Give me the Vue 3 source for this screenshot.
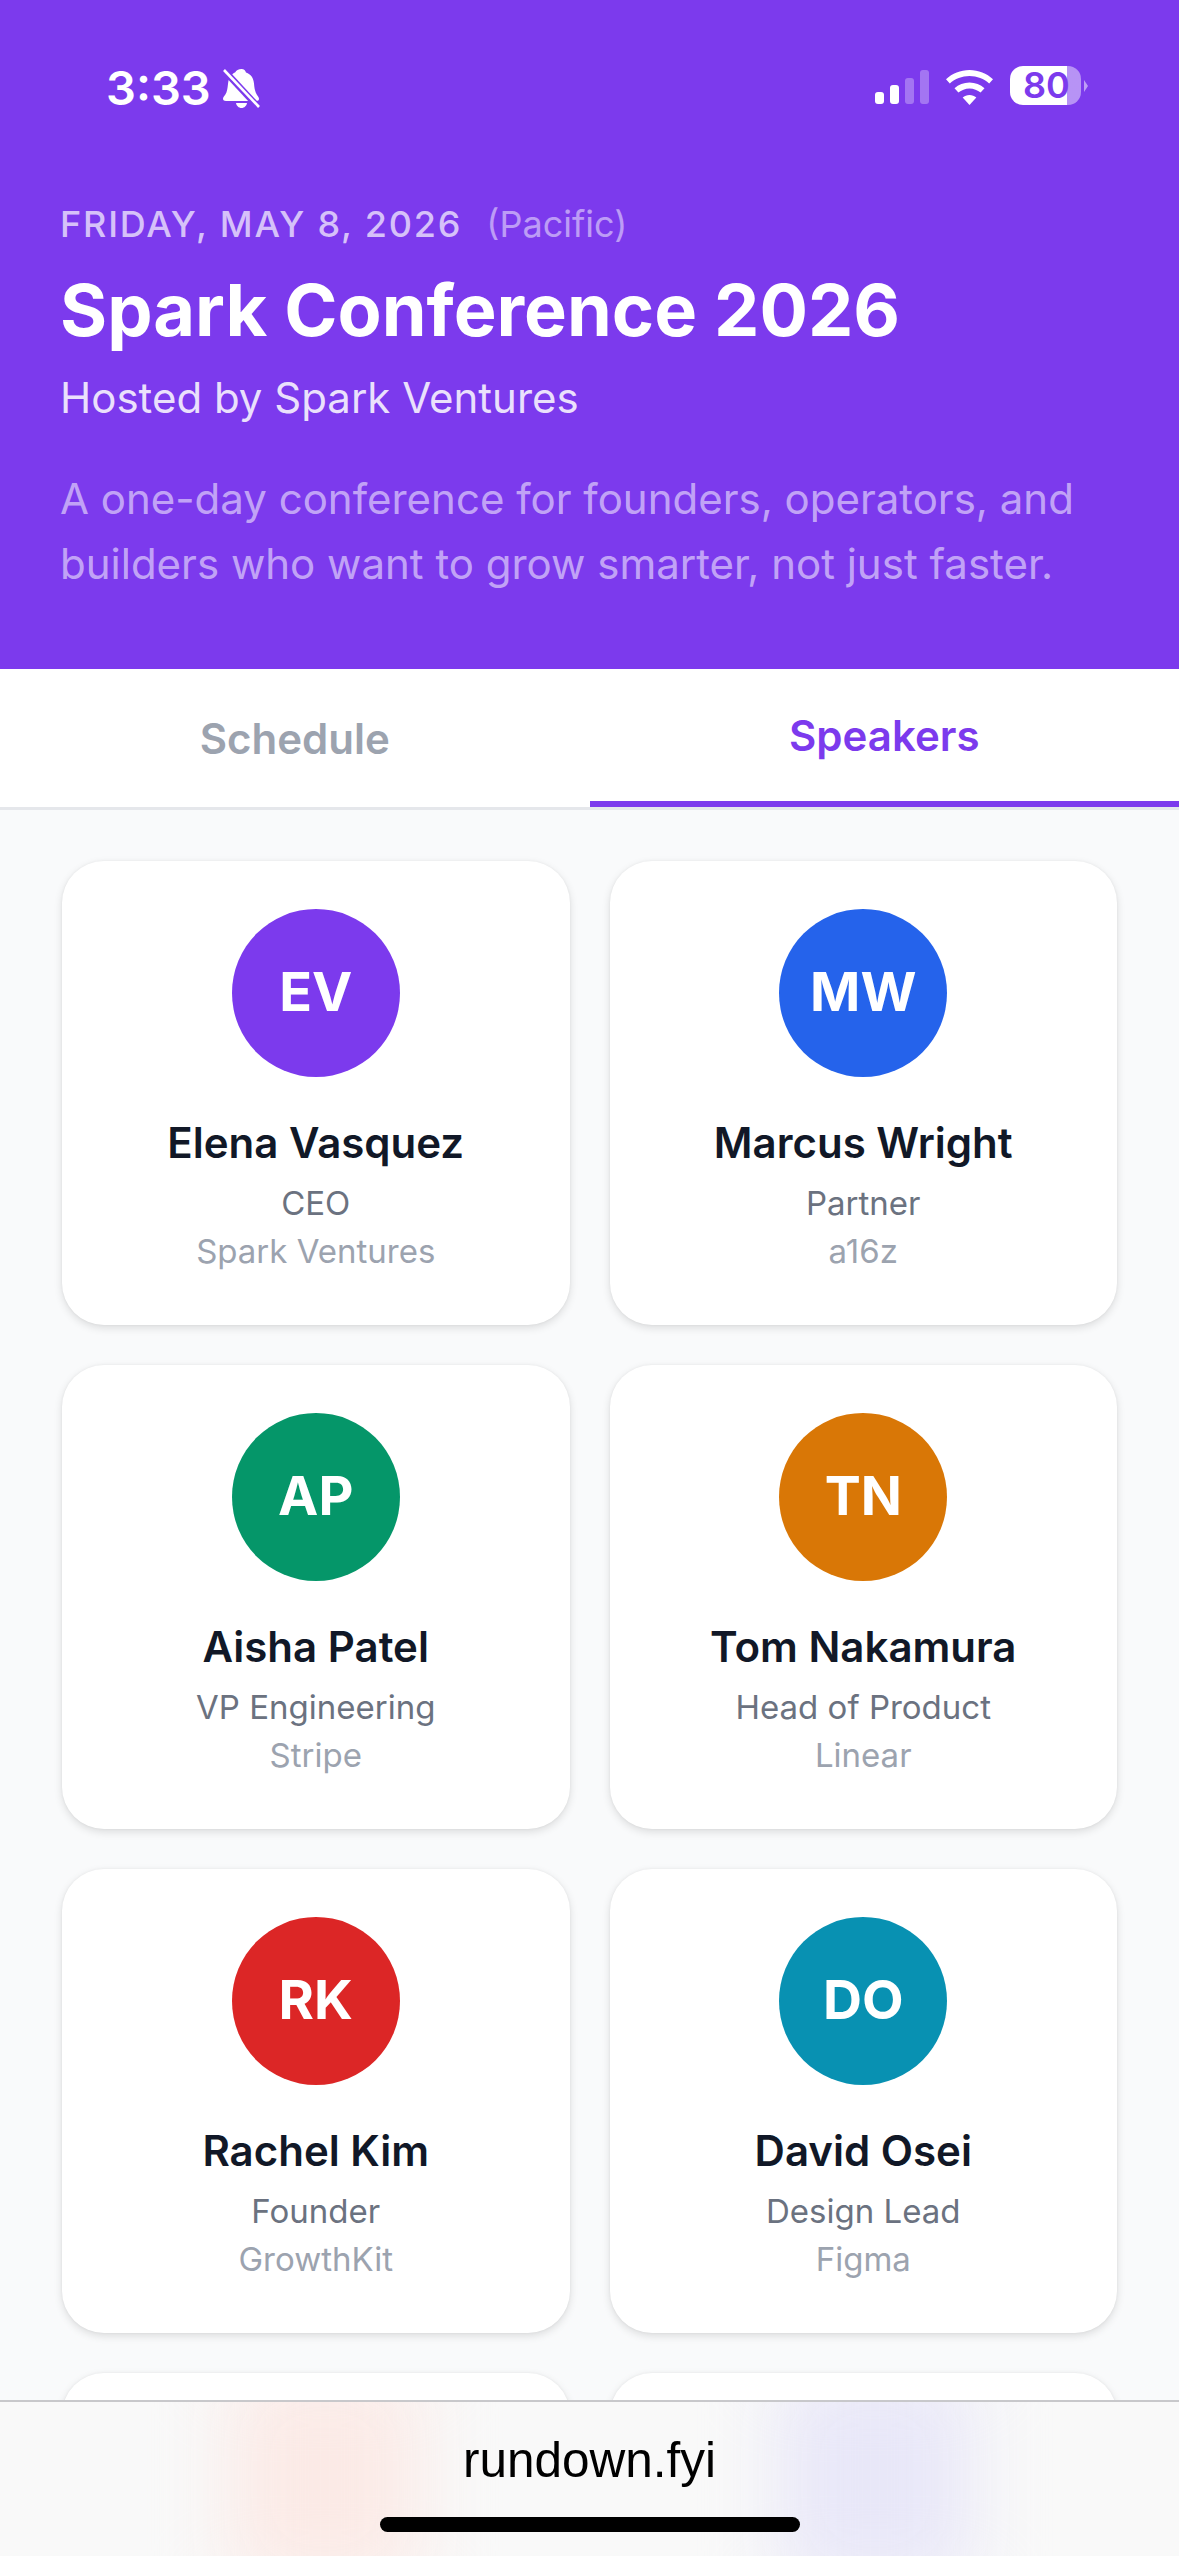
<script setup>
const speakers = [
  { initials: 'EV', name: 'Elena Vasquez', role: 'CEO', company: 'Spark Ventures', color: '#7c3aed' },
  { initials: 'MW', name: 'Marcus Wright', role: 'Partner', company: 'a16z', color: '#2563eb' },
  { initials: 'AP', name: 'Aisha Patel', role: 'VP Engineering', company: 'Stripe', color: '#059669' },
  { initials: 'TN', name: 'Tom Nakamura', role: 'Head of Product', company: 'Linear', color: '#d97706' },
  { initials: 'RK', name: 'Rachel Kim', role: 'Founder', company: 'GrowthKit', color: '#dc2626' },
  { initials: 'DO', name: 'David Osei', role: 'Design Lead', company: 'Figma', color: '#0891b2' }
]
</script>

<template>
  <div class="page">
    <header class="hero">
      <div class="status">
        <div class="status-left">
          <span class="time">3:33</span>
          <svg class="bell" viewBox="0 0 37 39" width="37" height="39">
            <path fill="#fff" d="M18.5 0c2.6 0 4 1.8 4.5 3.6 5 1.6 7.5 5.6 8 11 .4 4.4 1 8.600 3 11.400 1 1.500 2 2.600 2 4 0 1.200-1 2-2.500 2H3c-1.700 0-3-.8-3-2.200 0-1.400 1.200-2.500 2.200-4 1.800-2.600 2.300-6 2.800-10.800.3-2.600.6-4.500 1.800-6.800 1-1.800 3-3.800 5.500-5C13 1.800 15.500 0 18.500 0z"/>
            <path fill="#fff" d="M13 34h11c-.4 2.800-2.700 5-5.500 5S13.400 36.800 13 34z"/>
            <path stroke="#7c3aed" stroke-width="6.500" d="M-2 -2 L37 40"/>
            <path stroke="#fff" stroke-width="2.600" d="M1 1 L36 38"/>
          </svg>
        </div>
        <div class="status-right">
          <div class="signal">
            <i class="bar b1"></i><i class="bar b2"></i><i class="bar b3 dim"></i><i class="bar b4 dim"></i>
          </div>
          <svg class="wifi" viewBox="0 0 47 35" width="47" height="35">
            <path fill="#fff" d="M23.500 0C32.500 0 40.700 3.500 47 9.200l-3.800 4.300C38 8.800 31 6 23.500 6S9 8.800 3.800 13.500L0 9.200C6.300 3.500 14.500 0 23.500 0z"/>
            <path fill="#fff" d="M23.500 12.500c5.700 0 11 2.200 15 5.800l-3.900 4.300c-3-2.600-6.900-4.200-11.100-4.200s-8.100 1.600-11.100 4.200l-3.900-4.300c4-3.600 9.300-5.800 15-5.800z"/>
            <path fill="#fff" d="M23.500 25c2.600 0 5 1 6.800 2.600L23.500 35l-6.800-7.400C18.500 26 20.900 25 23.500 25z"/>
          </svg>
          <div class="battery">
            <div class="cell"><span class="level">80</span></div>
            <i class="nub"></i>
          </div>
        </div>
      </div>
      <div class="date-line">
        <span class="date">FRIDAY, MAY 8, 2026</span>
        <span class="zone">(Pacific)</span>
      </div>
      <h1 class="title">Spark Conference 2026</h1>
      <p class="host">Hosted by Spark Ventures</p>
      <p class="desc">A one-day conference for founders, operators, and builders who want to grow smarter, not just faster.</p>
    </header>

    <nav class="tabs">
      <div class="tab">Schedule</div>
      <div class="tab active">Speakers</div>
    </nav>

    <main class="grid">
      <article v-for="s in speakers" :key="s.initials" class="card">
        <div class="avatar" :style="{ background: s.color }"><span class="initials">{{ s.initials }}</span></div>
        <div class="name">{{ s.name }}</div>
        <div class="role">{{ s.role }}</div>
        <div class="company">{{ s.company }}</div>
      </article>
      <article class="card blank"></article>
      <article class="card blank"></article>
    </main>

    <footer class="browser">
      <div class="blob warm"></div>
      <div class="blob cool"></div>
      <div class="url">rundown.fyi</div>
      <div class="home"></div>
    </footer>
  </div>
</template>

<style>
html, body { margin: 0; padding: 0; background: #f9fafb; }
</style>

<style scoped>
.page {
  position: relative;
  width: 1179px;
  height: 2556px;
  overflow: hidden;
  background: #f9fafb;
  font-family: Inter, "Liberation Sans", sans-serif;
}
.hero {
  height: 669px;
  box-sizing: border-box;
  background: #7c3aed;
  color: #fff;
  padding: 66px 60px 0;
}
.status {
  display: flex;
  justify-content: space-between;
  align-items: flex-start;
  height: 41px;
  padding: 0 31px 0 46px;
  margin-bottom: 95px;
}
.status-left { display: flex; align-items: center; gap: 12px; }
.time { font-size: 47px; line-height: 44px; font-weight: 600; }
.bell { display: block; }
.status-right { display: flex; align-items: flex-start; }
.signal { display: flex; align-items: flex-end; gap: 6px; height: 34px; margin-top: 4px; }
.bar { display: block; width: 9px; background: #fff; border-radius: 3px; }
.b1 { height: 12px; }
.b2 { height: 19px; }
.b3 { height: 26px; }
.b4 { height: 34px; }
.dim { background: rgba(255,255,255,.3); }
.wifi { display: block; margin: 4px 0 0 17px; }
.battery { display: flex; align-items: center; margin-left: 17px; }
.cell {
  width: 71px;
  height: 39px;
  border-radius: 13px;
  display: flex;
  align-items: center;
  padding-left: 13px;
  box-sizing: border-box;
  background: linear-gradient(90deg, #fff 57px, rgba(255,255,255,.45) 57px);
}
.level { color: #7c3aed; font-size: 36px; line-height: 39px; font-weight: 600; }
.nub {
  display: block;
  margin-left: 3px;
  width: 0;
  height: 0;
  border-left: 4px solid rgba(255,255,255,.5);
  border-top: 6px solid transparent;
  border-bottom: 6px solid transparent;
}
.date-line { display: flex; align-items: baseline; gap: 24px; height: 44px; line-height: 44px; }
.date { font-size: 36px; font-weight: 500; letter-spacing: 1.8px; color: rgba(255,255,255,.7); }
.zone { font-size: 36px; color: rgba(255,255,255,.5); }
.title { margin: 22px 0 0; font-size: 72px; line-height: 84px; font-weight: 700; color: #fff; }
.host { margin: 21px 0 0; font-size: 42px; line-height: 50px; color: rgba(255,255,255,.85); }
.desc { margin: 43px 0 0; font-size: 42px; line-height: 65px; color: rgba(255,255,255,.55); }
.tabs {
  display: flex;
  background: #fff;
  height: 141px;
  box-sizing: border-box;
  border-bottom: 3px solid #e5e7eb;
}
.tab {
  flex: 1;
  display: flex;
  align-items: center;
  justify-content: center;
  font-size: 42px;
  font-weight: 600;
  color: #9ca3af;
}
.tab.active {
  color: #7c3aed;
  box-sizing: border-box;
  border-bottom: 6px solid #7c3aed;
}
.grid {
  display: grid;
  grid-template-columns: 1fr 1fr;
  gap: 40px;
  padding: 51px 62px 0;
}
.card {
  box-sizing: border-box;
  height: 464px;
  background: #fff;
  border-radius: 42px;
  padding-top: 48px;
  display: flex;
  flex-direction: column;
  align-items: center;
  box-shadow: 0 3px 9px rgba(0,0,0,.12), 0 0 3px rgba(0,0,0,.05);
}
.avatar {
  width: 168px;
  height: 168px;
  border-radius: 50%;
  display: flex;
  align-items: center;
  justify-content: center;
  color: #fff;
  font-size: 54px;
  font-weight: 700;
}
.initials { margin-top: -4px; }
.name { margin-top: 40px; font-size: 42px; line-height: 51px; font-weight: 600; color: #111827; }
.role { margin-top: 11px; font-size: 33px; line-height: 48px; color: #6b7280; }
.company { font-size: 33px; line-height: 48px; color: #9ca3af; }
.browser {
  position: absolute;
  left: 0;
  right: 0;
  bottom: 0;
  height: 156px;
  box-sizing: border-box;
  border-top: 2px solid #c8c8cb;
  background: #f9f9f9;
  overflow: hidden;
}
.blob { position: absolute; top: -30px; bottom: -30px; filter: blur(38px); }
.warm { left: 230px; width: 190px; background: #fbeae6; }
.cool { left: 780px; width: 190px; background: #e8e7f8; }
.url {
  position: relative;
  margin-top: 30px;
  text-align: center;
  font-family: "Liberation Sans", sans-serif;
  font-size: 49.5px;
  line-height: 56px;
  color: #000;
}
.home {
  position: absolute;
  left: 380px;
  top: 115px;
  width: 420px;
  height: 15px;
  border-radius: 8px;
  background: #000;
}
</style>
